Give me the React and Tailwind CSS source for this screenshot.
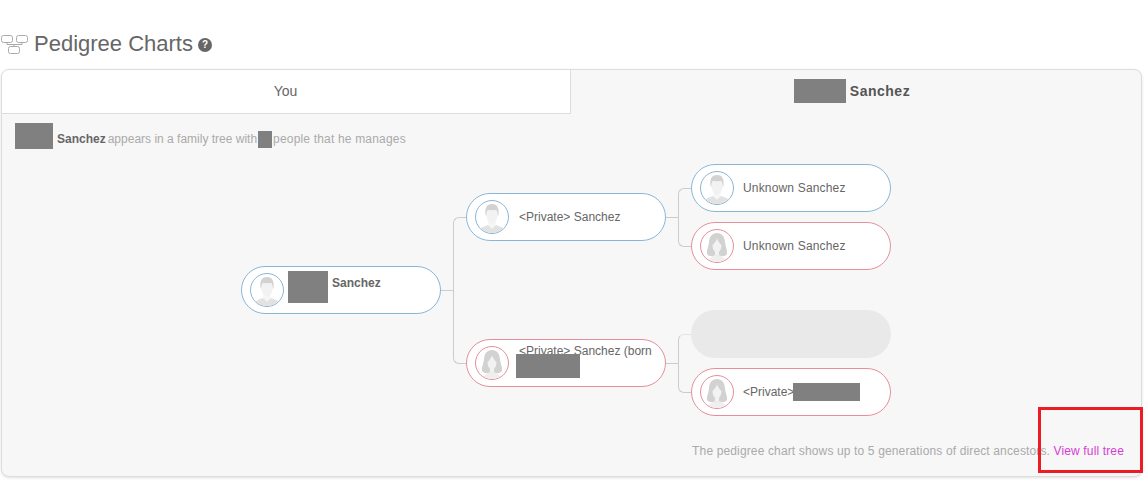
const Redact = ({ className }) => <span className={`inline-block bg-[#808080] ${className}`} />;

const Male = () => (
  <svg viewBox="0 0 32 32" className="size-full">
    <path d="M2 32c1-5 4-6 10-8l4 3 4-3c6 2 9 3 10 8z" fill="#e2e2e2" />
    <path d="M12 23l4 5 4-5-1-4h-6z" fill="#f6f6f6" />
    <path d="M9.500 14c-1-8 2-11 6.500-11s7.500 3 6.500 11l-1 1c0-3-.5-5-1.500-6-3 .8-6 .8-8 0-1 1-1.500 3-1.500 6z" fill="#d2d2d2" />
    <path d="M10.500 14c0-3 .5-4 1.500-5 2 .8 5 .8 8 0 1 1 1.500 2 1.500 5 0 5-3 8.500-5.500 8.500s-5.500-3.500-5.500-8.500z" fill="#f2f2f2" />
  </svg>
);

const Female = () => (
  <svg viewBox="0 0 32 32" className="size-full">
    <path d="M16 3c-5 0-7.500 3.500-8 9-.4 5-2.500 8-2 11.500.5 2.500 4 3 7 2.500h6c3 .5 6.500 0 7-2.500.5-3.500-1.600-6.500-2-11.500-.5-5.500-3-9-8-9z" fill="#d2d2d2" />
    <path d="M11.500 15c1.500-1 3.500-4 4.500-6.500 1 2.500 3 5.500 4.500 6.500 0 4-2 7.500-4.500 7.500s-4.500-3.500-4.500-7.500z" fill="#f2f2f2" />
    <path d="M14 21h4v4l-2 1-2-1z" fill="#f2f2f2" />
    <path d="M7 32c1-4 4-6 7-7l2 1 2-1c3 1 6 3 7 7z" fill="#efefef" />
  </svg>
);

const Avatar = ({ female }) => (
  <div className={`size-[34px] shrink-0 overflow-hidden rounded-full border bg-white ${female ? "border-[#e58f9a]" : "border-[#8ab6d6]"}`}>
    {female ? <Female /> : <Male />}
  </div>
);

const Node = ({ female, children }) => (
  <div className={`flex h-12 w-[200px] shrink-0 items-center rounded-3xl border bg-white pl-2 ${female ? "border-[#e58f9a]" : "border-[#8ab6d6]"}`}>
    <Avatar female={female} />
    <div className="ml-[10px] flex-1 text-xs text-[#666]">{children}</div>
  </div>
);

const Stem = () => <div className="h-px w-3 shrink-0 bg-[#ccc]" />;

const Elbow = ({ height, faded }) => (
  <div className={`w-[13px] shrink-0 rounded-l-md border-y border-l border-[#ccc] ${height} ${faded ? "border-t-[#e4e4e4]" : ""}`} />
);

const Parents = ({ faded, children }) => (
  <div className="flex items-center">
    <Stem />
    <Elbow height="h-[59px]" faded={faded} />
    <div className="flex flex-col gap-[10px]">{children}</div>
  </div>
);

export default function App() {
  return (
    <div className="relative h-[482px] w-[1147px] overflow-hidden bg-white pt-[29px] font-['Liberation_Sans',Arial,sans-serif]">
      <div className="flex h-[28px] items-center pl-px">
        <svg viewBox="0 0 27 21" className="h-[21px] w-[27px]" fill="none" stroke="#aaaaaa" strokeWidth="1">
          <rect x="0.500" y="2.500" width="11" height="7" rx="2" />
          <rect x="15.500" y="2.500" width="11" height="7" rx="2" />
          <rect x="7.500" y="13.500" width="11" height="7" rx="2" />
          <path d="M6 9.500v2h15v-2M13 11.500v2" />
        </svg>
        <h1 className="ml-[6px] text-[22px] font-normal text-[#666]">Pedigree Charts</h1>
        <span className="ml-[5px] mt-[3px] flex size-[14px] items-center justify-center rounded-full bg-[#666] text-[10px] font-bold text-white">?</span>
      </div>

      <div className="ml-px mt-[12px] h-[408px] w-[1141px] overflow-hidden rounded-lg border border-[#ddd] bg-[#f7f7f7] shadow-[0_1px_3px_rgba(0,0,0,0.12)]">
        <div className="flex h-[44px]">
          <div className="flex w-[569px] items-center justify-center border-b border-r border-[#ddd] bg-white pb-[2px] pr-[1px] text-sm text-[#666]">You</div>
          <div className="flex flex-1 items-center justify-center pb-[2px] pr-[8px] text-sm font-bold tracking-[0.5px] text-[#555]">
            <Redact className="mr-1 h-6 w-[52px]" />
            Sanchez
          </div>
        </div>

        <div className="flex h-[50px] items-start pl-[13px] pt-[9px] text-xs text-[#aaa]">
          <Redact className="h-[26px] w-[38px]" />
          <span className="ml-1 mt-[8px] font-bold text-[#666]">Sanchez</span>
          <span className="ml-[2px] mt-[8px]">appears in a family tree with</span>
          <Redact className="ml-px mt-[8px] h-[17px] w-[14px]" />
          <span className="ml-px mt-[8px] tracking-[0.18px]">people that he manages</span>
        </div>

        <div className="ml-[239px] flex h-[252px] items-center">
          <Node>
            <div className="flex items-start">
              <Redact className="-ml-[6px] -mt-[7px] h-8 w-10" />
              <span className="ml-1 -mt-[3px] font-bold">Sanchez</span>
            </div>
          </Node>
          <Stem />
          <Elbow height="h-[147px]" />
          <div className="flex flex-col gap-[40px]">
            <div className="flex items-center">
              <Node>&lt;Private&gt; Sanchez</Node>
              <Parents>
                <Node><span className="-ml-px tracking-[0.17px]">Unknown Sanchez</span></Node>
                <Node female><span className="-ml-px tracking-[0.17px]">Unknown Sanchez</span></Node>
              </Parents>
            </div>
            <div className="flex items-center">
              <Node female>
                <div className="leading-[14px]">&lt;Private&gt; Sanchez (born</div>
                <Redact className="-ml-[3px] -mt-[4px] block h-6 w-16" />
              </Node>
              <Parents faded>
                <div className="h-12 w-[200px] rounded-3xl bg-[#e9e9e9]" />
                <Node female>
                  <div className="-ml-px flex items-center">
                    &lt;Private&gt;
                    <Redact className="-ml-px h-[18px] w-[67px]" />
                  </div>
                </Node>
              </Parents>
            </div>
          </div>
        </div>

        <div className="mt-[27px] pr-[17px] text-right text-xs tracking-[0.14px] text-[#aaa]">
          The pedigree chart shows up to 5 generations of direct ancestors.{" "}
          <a className="text-[#d63dd6]">View full tree</a>
        </div>
      </div>

      <div className="absolute left-[1038px] top-[407px] h-[66px] w-[105px] border-[3px] border-[#ed1c24]" />
    </div>
  );
}
